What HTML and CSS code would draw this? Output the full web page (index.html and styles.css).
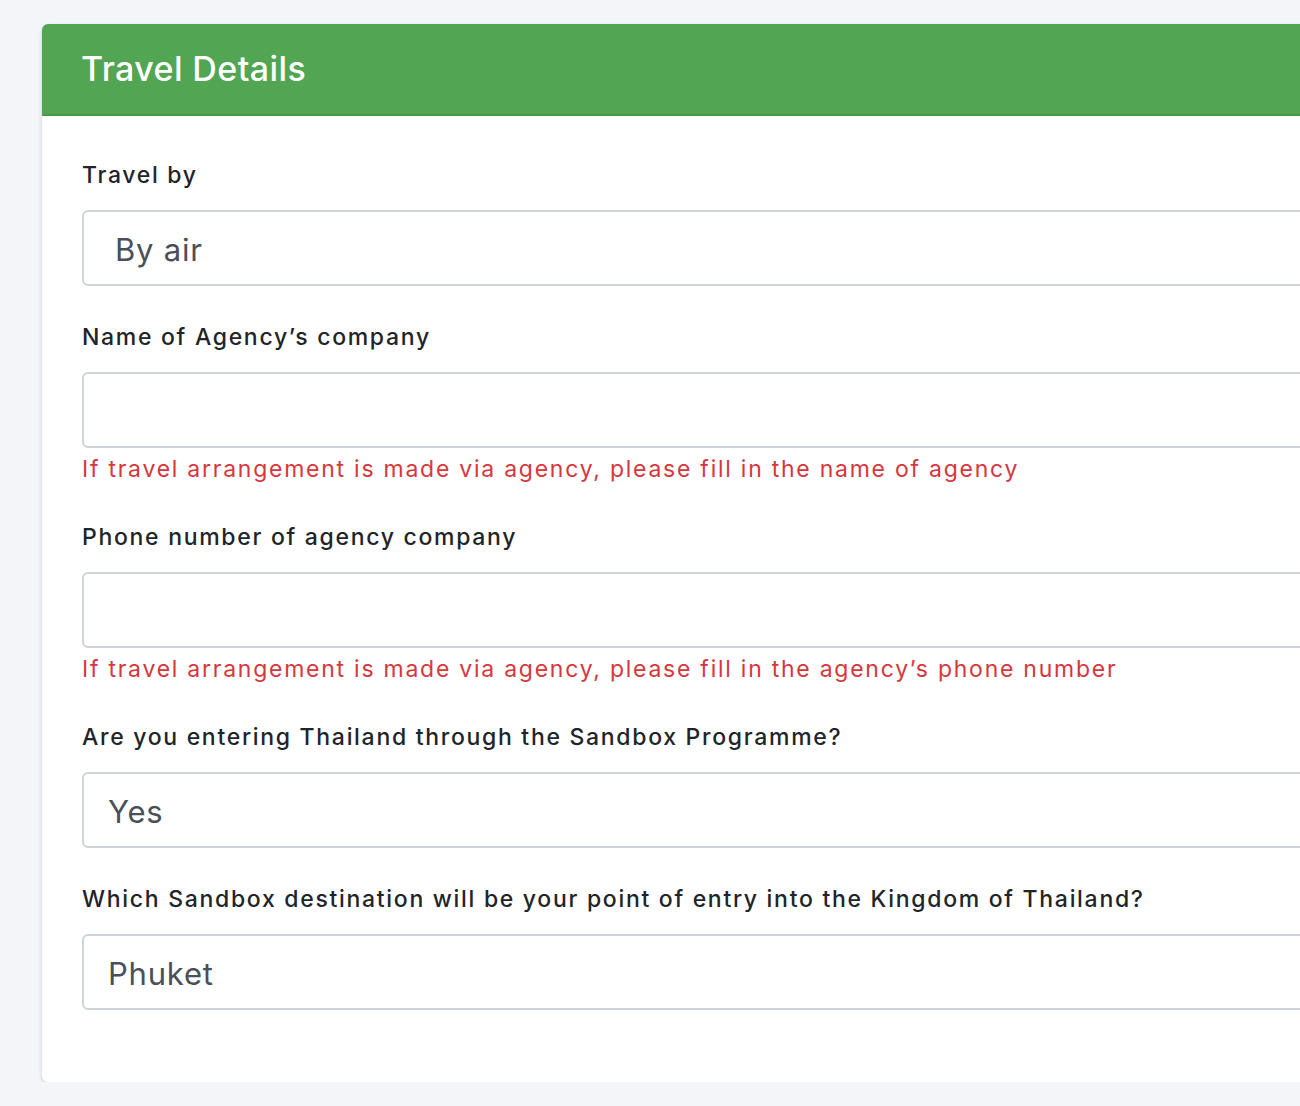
FILE: index.html
```html
<!DOCTYPE html>
<html lang="en">
<head>
    <meta charset="UTF-8">
    <meta name="viewport" content="width=device-width, initial-scale=1.0">
    <title>Travel Details</title>
    <link rel="stylesheet" href="styles.css">
</head>
<body>
    <div class="card">
        <div class="card-header">
            <h2 class="card-title">Travel Details</h2>
        </div>
        <div class="card-body">
            <div class="form-group">
                <label class="form-label">Travel by</label>
                <div class="form-select">
                    <span class="select-value select-value-wide">By air</span>
                </div>
            </div>
            <div class="form-group">
                <label class="form-label">Name of Agency’s company</label>
                <input class="form-control" type="text">
                <div class="form-hint">If travel arrangement is made via agency, please fill in the name of agency</div>
            </div>
            <div class="form-group">
                <label class="form-label">Phone number of agency company</label>
                <input class="form-control" type="text">
                <div class="form-hint">If travel arrangement is made via agency, please fill in the agency’s phone number</div>
            </div>
            <div class="form-group">
                <label class="form-label">Are you entering Thailand through the Sandbox Programme?</label>
                <div class="form-select">
                    <span class="select-value">Yes</span>
                </div>
            </div>
            <div class="form-group">
                <label class="form-label">Which Sandbox destination will be your point of entry into the Kingdom of Thailand?</label>
                <div class="form-select">
                    <span class="select-value">Phuket</span>
                </div>
            </div>
        </div>
    </div>
</body>
</html>
```

FILE: styles.css
```css
/* page */
body, html {
    margin: 0;
    padding: 0;
    background-color: #f4f5f9;
    font-family: Inter, 'Open Sans', sans-serif;
    overflow: hidden;
}

body {
    padding: 24px 0 0 42px;
}

.card {
    width: 1320px;
    background-color: #fff;
    border-radius: 6px;
    box-shadow: 0 2px 4px rgba(0, 0, 0, 0.16);
    overflow: hidden;
}

.card-header {
    background-color: #52a552;
    border-bottom: 2px solid #4b974b;
    height: 90px;
    display: flex;
    align-items: center;
    padding: 0 39px;
}

.card-title {
    margin: 0 0 2px 0;
    color: #fff;
    font-size: 34px;
    font-weight: 500;
    letter-spacing: 0.4px;
}

.card-body {
    padding: 43px 0 37px 40px;
}

.form-group {
    margin-bottom: 35px;
}

.form-label {
    display: block;
    font-size: 23px;
    line-height: 33px;
    font-weight: 500;
    letter-spacing: 1.7px;
    color: #212529;
    margin-bottom: 18px;
}

.form-control, .form-select {
    display: block;
    box-sizing: border-box;
    width: 100%;
    height: 76px;
    border: 2px solid #ced4da;
    border-radius: 6px;
    background-color: #fff;
    margin: 0;
}

.form-select {
    display: flex;
    align-items: center;
    padding-left: 24px;
}

.select-value {
    font-size: 31px;
    color: #495057;
    letter-spacing: 0.8px;
    margin-top: 3px;
}

.select-value-wide {
    padding-left: 7px;
}

.form-hint {
    margin-top: 5px;
    font-size: 23px;
    line-height: 33px;
    letter-spacing: 1.75px;
    color: #d6373d;
    margin-bottom: 2px;
}
```
